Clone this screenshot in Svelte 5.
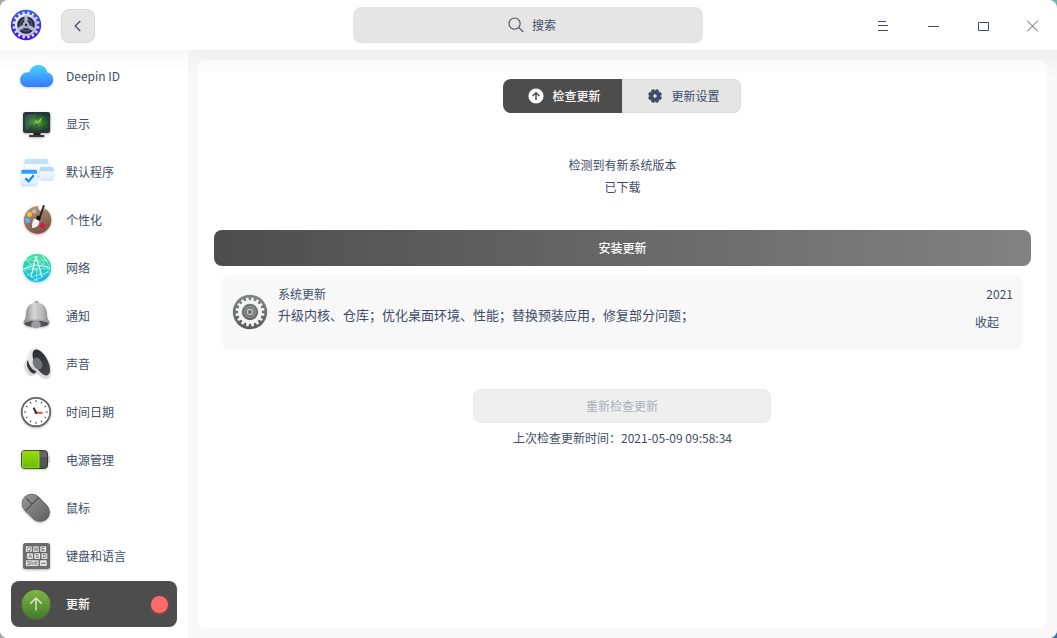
<script lang="ts">
	type MenuItem = { id: string; label: string; badge?: boolean };

	const items: MenuItem[] = [
		{ id: 'account', label: 'Deepin ID' },
		{ id: 'display', label: '显示' },
		{ id: 'defapp', label: '默认程序' },
		{ id: 'personal', label: '个性化' },
		{ id: 'network', label: '网络' },
		{ id: 'notify', label: '通知' },
		{ id: 'sound', label: '声音' },
		{ id: 'datetime', label: '时间日期' },
		{ id: 'power', label: '电源管理' },
		{ id: 'mouse', label: '鼠标' },
		{ id: 'keyboard', label: '键盘和语言' },
		{ id: 'update', label: '更新', badge: true }
	];

	let active = $state('update');
	let tab = $state('check');
	let expanded = $state(true);

	// evenly spaced angles for gear teeth and clock marks
	const steps = (n: number) => Array.from({ length: n }, (_, i) => (i * 360) / n);
</script>

<div class="window">
	<header>
		<svg class="logo" viewBox="0 0 32 32">
			<defs>
				<linearGradient id="logo-bg" x1="0" y1="0" x2="0" y2="1">
					<stop offset="0" stop-color="#2f5cf5" />
					<stop offset="1" stop-color="#4a10d8" />
				</linearGradient>
				<linearGradient id="logo-ring" x1="0" y1="0" x2="1" y2="1">
					<stop offset="0" stop-color="#f4f4fa" />
					<stop offset="1" stop-color="#a9abc4" />
				</linearGradient>
			</defs>
			<circle cx="16" cy="16" r="15.2" fill="url(#logo-bg)" />
			{#each steps(16) as a}
				<rect x="14.9" y="2.4" width="2.2" height="4" fill="#e4e6f3" transform="rotate({a + 11} 16 16)" />
			{/each}
			<circle cx="16" cy="16" r="10" fill="#25284c" stroke="url(#logo-ring)" stroke-width="2.4" />
			<circle cx="16" cy="16" r="6" fill="none" stroke="#55577a" stroke-width="1.4" />
			{#each steps(3) as a}
				<path d="M14.200 16l.2 9.500h3.200l.2-9.500z" fill="#b4b6ca" transform="rotate({a + 60} 16 16)" />
			{/each}
			<circle cx="16" cy="16" r="3.6" fill="#a6a8be" />
			<circle cx="16" cy="16" r="1.2" fill="#22264e" />
		</svg>
		<button class="back" aria-label="返回">
			<svg viewBox="0 0 12 12"><path d="M8.3 1L3.2 6l5.1 5" /></svg>
		</button>
		<div class="search">
			<svg viewBox="0 0 16 16"><circle cx="6.6" cy="6.6" r="5.6" /><path d="M10.7 10.7l4.7 4.3" /></svg>
			<span>搜索</span>
		</div>
		<div class="controls">
			<svg viewBox="0 0 12 12"><path d="M1 1.5h8M1 5.5h10M1 10.5h10" /></svg>
			<svg viewBox="0 0 12 12"><path d="M1 6.5h11" /></svg>
			<svg viewBox="0 0 12 12"><path d="M1.5 2.5h10v8h-10z" /></svg>
			<svg viewBox="0 0 12 12"><path class="thin" d="M0 .5l11 11M11 .5l-11 11" /></svg>
		</div>
	</header>

	<div class="body">
		<nav>
			{#each items as item}
				<button class="item" class:active={item.id === active} onclick={() => (active = item.id)}>
					<svg class="icon" viewBox="0 0 36 36">
						{#if item.id === 'account'}
							<defs>
								<linearGradient id="cloud" x1="0" y1="0" x2="0" y2="1">
									<stop offset="0" stop-color="#45d7fc" />
									<stop offset="1" stop-color="#3a76fd" />
								</linearGradient>
							</defs>
							<path
								class="blue-shadow"
								d="M8.6 29a7.4 7.4 0 0 1-.2-14.8c.8 0 1.400 0 2 .3C11.300 10 15 7 19.300 7c4.700 0 8.300 3.200 9 7.500 3.600.4 5.900 3.300 5.900 7 0 4.200-3 7.500-7.200 7.500z"
								fill="url(#cloud)"
							/>
						{:else if item.id === 'display'}
							<defs>
								<radialGradient id="screen" cx=".52" cy=".55" r=".6">
									<stop offset="0" stop-color="#6fae1c" />
									<stop offset=".5" stop-color="#2d6a2a" />
									<stop offset="1" stop-color="#143c42" />
								</radialGradient>
							</defs>
							<g class="shadow">
								<path d="M14.500 26h7v3.400h-7z" fill="#1f1f1f" />
								<path d="M11.500 29h13a1 1 0 0 1 0 2h-14a1 1 0 0 1 1-2z" fill="#3a3a3a" />
								<rect x="4" y="6" width="27.200" height="21" rx="2.500" fill="#333" />
							</g>
							<rect x="5.800" y="7.600" width="23.600" height="16.400" rx=".8" fill="url(#screen)" />
							<path d="M5.800 8.400h12L9 24H5.800z" fill="#fff" opacity=".1" />
							<path d="M23.500 10.500l-4.500 4.500-4.500-1.500 2.500 2.300-3.500 1.200 4 .4 1 2.600 1.200-3.500 2-.8z" fill="#7cc06a" />
							<path d="M17.300 17l1.800 1-1.200 3-1.800-.4z" fill="#603a8c" />
						{:else if item.id === 'defapp'}
							<defs>
								<linearGradient id="pane" x1="0" y1="0" x2="0" y2="1">
									<stop offset="0" stop-color="#fff" />
									<stop offset="1" stop-color="#e0edff" />
								</linearGradient>
							</defs>
							<g class="blue-shadow faint">
								<rect x="5.500" y="5" width="23.500" height="17" rx="2" fill="#f4f9ff" />
							</g>
							<path d="M7.500 5h19.500a2 2 0 0 1 2 2v3H5.500V7a2 2 0 0 1 2-2z" fill="#c4e0ff" />
							<g class="blue-shadow">
								<rect x="20.800" y="13" width="13.500" height="12" rx="1.800" fill="url(#pane)" />
								<path d="M22.600 13h9.900a1.800 1.800 0 0 1 1.800 1.800v2.400H20.800v-2.400a1.800 1.800 0 0 1 1.800-1.800z" fill="#b5d7fe" />
							</g>
							<g class="blue-shadow">
								<rect x="2.300" y="15.700" width="15.700" height="15" rx="1.500" fill="url(#pane)" />
								<path d="M3.800 15.700h12.700a1.500 1.500 0 0 1 1.500 1.500v2.500H2.300v-2.500a1.500 1.500 0 0 1 1.500-1.500z" fill="#2c9dff" />
							</g>
							<path d="M6.300 24.200l3.200 3.200 5.300-6.200" fill="none" stroke="#1089ff" stroke-width="2.200" />
						{:else if item.id === 'personal'}
							<defs>
								<linearGradient id="palette" x1="0" y1="0" x2=".4" y2="1">
									<stop offset="0" stop-color="#b59a86" />
									<stop offset="1" stop-color="#7c5747" />
								</linearGradient>
							</defs>
							<path
								class="brown-shadow"
								d="M19.500 4.300c-1 2.600.6 5 3.300 4.600 1.900-.3 2.600-1.300 2.800-2.700A13.700 13.700 0 1 1 19.500 4.300z"
								fill="url(#palette)"
							/>
							<circle cx="15.300" cy="9.500" r="2.100" fill="#dab7a8" />
							<circle cx="10.500" cy="12.300" r="2.600" fill="#f5b840" />
							<circle cx="8.500" cy="18.400" r="2.700" fill="#62aef2" />
							<circle cx="23.500" cy="23.600" r="2.700" fill="#dc153f" />
							<path d="M19.600 15.500l4.200-11.800 1-.8 1.100.8-.5 1.400-4 11.400z" fill="#222" />
							<path d="M18.400 13.200l3.600 2.200-1.600 3.500-3.800-2z" fill="#111" />
							<path d="M16 16.500l4.300 2.400c0 5.100-3 6.500-7.300 7.100.3-3.300-.2-7.500 3-9.500z" fill="#f5f2ef" />
						{:else if item.id === 'network'}
							<defs>
								<linearGradient id="globe" x1="0" y1="0" x2="0" y2="1">
									<stop offset="0" stop-color="#36e08b" />
									<stop offset=".55" stop-color="#22cdc1" />
									<stop offset="1" stop-color="#16b3ef" />
								</linearGradient>
							</defs>
							<circle class="cyan-shadow" cx="18" cy="18" r="14" fill="url(#globe)" />
							<path
								d="M17 6l-5 21M17 6l6 21M17 6l11 5M17 6L7 10M7 10l10 9M7 10l21 1M28 11l-11 8M28 11l3 8M4.500 19H17M17 19l14-.5M4.500 19L12 27M4.500 19l13.500-8M12 27l18-5M23 27l-6-8M23 27l-9 4M12 27l7 4M23 27l8-8M18 11l13 7.500M17 19l1 12M8 26l9-7"
								fill="none"
								stroke="#e5fff9"
								stroke-width=".6"
								opacity=".85"
							/>
							<path d="M17 6l-5 21M17 6l6 21M4.500 19L17 15l12 2M23 5.500l5 5.500" fill="none" stroke="#fff" stroke-width=".9" />
						{:else if item.id === 'notify'}
							<defs>
								<linearGradient id="bell" x1="0" y1="0" x2="1" y2="0">
									<stop offset="0" stop-color="#7d7d7d" />
									<stop offset=".4" stop-color="#d6d6d6" />
									<stop offset=".75" stop-color="#b5b5b5" />
									<stop offset="1" stop-color="#808080" />
								</linearGradient>
							</defs>
							<g class="shadow">
								<circle cx="17.500" cy="5" r="2.200" fill="#a5a5a5" />
								<path
									d="M17.500 4.800c6.500 0 9.800 4.200 10.300 9.700.3 4 .3 6.500 2 8.300.8.800.8 2.600-.4 3.600-2 1.900-7.200 2.700-11.900 2.700S7.600 28.300 5.600 26.400c-1.200-1-1.200-2.800-.4-3.600 1.700-1.800 1.700-4.300 2-8.300.5-5.500 3.800-9.700 10.300-9.700z"
									fill="url(#bell)"
								/>
							</g>
							<ellipse cx="17.500" cy="25.800" rx="12" ry="3" fill="#505050" />
							<ellipse cx="17" cy="26.500" rx="4.800" ry="3.800" fill="#9c9ca0" />
							<path d="M5 24.500c3-3.200 22-3.200 25 0" fill="none" stroke="#9a9a9a" />
						{:else if item.id === 'sound'}
							<defs>
								<linearGradient id="horn" x1="0" y1="0" x2="1" y2="0">
									<stop offset="0" stop-color="#f2f2f2" />
									<stop offset=".5" stop-color="#b4b4b4" />
									<stop offset="1" stop-color="#777" />
								</linearGradient>
								<linearGradient id="cone" x1="0" y1="0" x2="0" y2="1">
									<stop offset="0" stop-color="#2b2d30" />
									<stop offset="1" stop-color="#45474a" />
								</linearGradient>
							</defs>
							<g class="shadow">
								<ellipse cx="10.500" cy="21.500" rx="4" ry="7.500" transform="rotate(-25 10.500 21.500)" fill="#d9d9df" />
								<ellipse cx="12.700" cy="20.500" rx="4" ry="7.500" transform="rotate(-25 12.700 20.500)" fill="#333" />
								<path d="M13 2.800C11.200 7 8.600 9.800 9 13.500c.5 5 3.500 9.800 8 12 4.500 1.800 8 4.500 12 5.800z" fill="url(#horn)" />
								<ellipse cx="21.800" cy="16.700" rx="7.800" ry="15.700" transform="rotate(-27 21.800 16.700)" fill="#e6e6e9" />
							</g>
							<ellipse cx="22.300" cy="16.500" rx="6.700" ry="14.200" transform="rotate(-27 22.300 16.500)" fill="url(#cone)" />
							<ellipse cx="18.500" cy="17.500" rx="4.400" ry="6.300" transform="rotate(-27 18.500 17.500)" fill="#727478" />
						{:else if item.id === 'datetime'}
							<circle class="shadow" cx="17" cy="18" r="14.200" fill="#fff" stroke="#616161" stroke-width="1.700" />
							{#each steps(12) as a}
								<path d="M17 6.200v2" stroke="#444" stroke-width="1" transform="rotate({a} 17 18)" />
							{/each}
							<path d="M17.200 19l-2.600-5.400" stroke="#333" stroke-width="2" />
							<path d="M17 18.800h6.500" stroke="#fb4a4f" stroke-width="2" />
							<circle cx="17" cy="18.600" r="1.500" fill="#444" />
						{:else if item.id === 'power'}
							<defs>
								<linearGradient id="charge" x1="0" y1="0" x2="0" y2="1">
									<stop offset="0" stop-color="#9bd90c" />
									<stop offset="1" stop-color="#67bd00" />
								</linearGradient>
							</defs>
							<rect x="27" y="13.500" width="4" height="7.500" rx="1" fill="#cfcfcf" />
							<rect class="green-shadow" x="2.500" y="8.500" width="26" height="18" rx="3.200" fill="#545454" stroke="#353535" />
							<path d="M5.300 9.300H20v16.400H5.300a2 2 0 0 1-2-2V11.300a2 2 0 0 1 2-2z" fill="url(#charge)" stroke="#a9e93a" stroke-width=".8" />
							<path d="M21 9.300h5a2 2 0 0 1 2 2v4h-7z" fill="#777" opacity=".5" />
						{:else if item.id === 'mouse'}
							<defs>
								<linearGradient id="mouse" x1="0" y1="0" x2="0" y2="1">
									<stop offset="0" stop-color="#929292" />
									<stop offset="1" stop-color="#656565" />
								</linearGradient>
							</defs>
							<g class="shadow">
								<rect x="7.200" y="2" width="19.600" height="31.500" rx="9.700" fill="#4e4e4e" transform="rotate(-45 17 18)" />
							</g>
							<g transform="rotate(-45 17 18)">
								<rect x="7.600" y="2.200" width="18.600" height="30.600" rx="9.300" fill="url(#mouse)" />
								<path d="M7.500 12.500h19M17 4v8.500" fill="none" stroke="#484848" />
							</g>
						{:else if item.id === 'keyboard'}
							<rect class="shadow" x="4" y="5" width="27" height="26" rx="2.500" fill="#6c6c6c" />
							<g fill="#ececec" stroke="#494949" stroke-width=".5">
								<rect x="6.500" y="8" width="6.600" height="6.300" rx="1" />
								<rect x="13.700" y="8" width="6.600" height="6.300" rx="1" />
								<rect x="20.900" y="8" width="6.600" height="6.300" rx="1" />
								<rect x="7.700" y="15" width="6.600" height="6.300" rx="1" />
								<rect x="14.900" y="15" width="6.600" height="6.300" rx="1" />
								<rect x="22.100" y="15" width="6.600" height="6.300" rx="1" />
								<rect x="6.500" y="22" width="13.500" height="6.300" rx="1" />
								<rect x="20.600" y="22" width="7.500" height="6.300" rx="1" />
							</g>
							<g class="keys">
								<text x="9.800" y="13.300">Q</text>
								<text x="17" y="13.300">W</text>
								<text x="24.200" y="13.300">E</text>
								<text x="11" y="20.300">A</text>
								<text x="18.200" y="20.300">S</text>
								<text x="25.400" y="20.300">D</text>
								<text x="13.200" y="27.300">Shift</text>
							</g>
							<path d="M22.200 25.200h4.400" stroke="#555" />
						{:else}
							<defs>
								<linearGradient id="upd" x1="0" y1="0" x2="0" y2="1">
									<stop offset="0" stop-color="#82b545" />
									<stop offset="1" stop-color="#3f7f28" />
								</linearGradient>
							</defs>
							<circle class="green-shadow" cx="17" cy="18" r="14" fill="url(#upd)" />
							<path d="M17 24.500V12.200M11.300 17.600l5.700-5.600 5.700 5.600" fill="none" stroke="#dadfd3" stroke-width="1.500" />
						{/if}
					</svg>
					<span>{item.label}</span>
					{#if item.badge}<i class="badge"></i>{/if}
				</button>
			{/each}
		</nav>

		<main>
			<section class="panel">
				<div class="tabs">
					<button class:on={tab === 'check'} onclick={() => (tab = 'check')}>
						<svg viewBox="0 0 16 16">
							<circle cx="8" cy="8" r="7.600" fill="currentColor" />
							<path d="M8 12V5M4.600 8L8 4.700 11.400 8" fill="none" stroke="#4d4d4d" stroke-width="1.500" />
						</svg>
						检查更新
					</button>
					<button class:on={tab === 'setting'} onclick={() => (tab = 'setting')}>
						<svg viewBox="0 0 16 16">
							{#each steps(8) as a}
								<rect x="6.300" y="1.100" width="3.400" height="4" rx=".7" fill="currentColor" transform="rotate({a + 22.5} 8 8)" />
							{/each}
							<circle cx="8" cy="8" r="3.700" fill="none" stroke="currentColor" stroke-width="4" />
						</svg>
						更新设置
					</button>
				</div>

				<div class="status">
					<p>检测到有新系统版本</p>
					<p>已下载</p>
				</div>

				<button class="install">安装更新</button>

				<article class="card">
					<svg class="gear" viewBox="0 0 36 36">
						<defs>
							<linearGradient id="gear" x1="0" y1="0" x2="0" y2="1">
								<stop offset="0" stop-color="#858789" />
								<stop offset="1" stop-color="#565b5d" />
							</linearGradient>
						</defs>
						<circle cx="18" cy="18" r="17.200" fill="url(#gear)" />
						{#each steps(16) as a}
							<path d="M16.900 3.400h2.200l.6 4h-3.400z" fill="#f3f3f3" transform="rotate({a + 11} 18 18)" />
						{/each}
						<circle cx="18" cy="18" r="10" fill="none" stroke="#f3f3f3" stroke-width="3.600" />
						<circle cx="18" cy="18" r="5.300" fill="none" stroke="#8c8f90" stroke-width="1.500" />
						<circle cx="18" cy="18" r="2.700" fill="none" stroke="#c4c6c6" stroke-width="1.200" />
					</svg>
					<div class="info">
						<h3>系统更新</h3>
						{#if expanded}
							<p>升级内核、仓库；优化桌面环境、性能；替换预装应用，修复部分问题；</p>
						{/if}
					</div>
					<div class="meta">
						<span>2021</span>
						<button onclick={() => (expanded = !expanded)}>{expanded ? '收起' : '展开'}</button>
					</div>
				</article>

				<button class="recheck" disabled>重新检查更新</button>
				<p class="last">上次检查更新时间：2021-05-09 09:58:34</p>
			</section>
		</main>
	</div>
</div>

<style>
	:global(body) {
		background:
			linear-gradient(to right, #a6a6a6 50%, transparent 50%),
			linear-gradient(#6fb3b3 50%, #3471a8 50%);
	}

	.window {
		width: 1057px;
		height: 638px;
		display: flex;
		flex-direction: column;
		overflow: hidden;
		border-radius: 8px;
		background: #fff;
		color: #414d68;
		font: 12px/18px 'Noto Sans CJK SC', sans-serif;
	}

	button {
		font: inherit;
		color: inherit;
		border: none;
		padding: 0;
		background: none;
	}

	p,
	h3 {
		margin: 0;
		font-size: 12px;
		font-weight: 400;
	}

	header {
		height: 50px;
		flex: none;
		display: flex;
		align-items: center;
		padding: 0 18px 0 10px;
	}

	.logo {
		width: 32px;
		height: 32px;
	}

	.back {
		width: 34px;
		height: 34px;
		box-sizing: border-box;
		margin: 2px 0 0 19px;
		display: grid;
		place-items: center;
		background: #e5e5e5;
		border: 1px solid #d9d9d9;
		border-radius: 8px;
	}

	.back svg {
		width: 12px;
		height: 12px;
		fill: none;
		stroke: #414d68;
		stroke-width: 1.3;
	}

	.search {
		width: 350px;
		height: 36px;
		box-sizing: border-box;
		margin-left: 258px;
		padding-left: 8px;
		display: flex;
		align-items: center;
		justify-content: center;
		gap: 8px;
		border-radius: 8px;
		background: #e5e5e5;
	}

	.search svg {
		width: 16px;
		height: 16px;
		fill: none;
		stroke: #414d68;
		stroke-width: 1.1;
	}

	.controls {
		display: flex;
		gap: 38px;
		margin-left: auto;
		padding-top: 2px;
	}

	.controls svg {
		width: 12px;
		height: 12px;
		fill: none;
		stroke: #414d68;
	}

	.controls .thin {
		stroke-width: 0.9;
	}

	.body {
		flex: 1;
		display: flex;
		min-height: 0;
	}

	nav {
		width: 188px;
		box-sizing: border-box;
		padding: 3px 11px;
		display: flex;
		flex-direction: column;
		gap: 2px;
		background: linear-gradient(#f8f8f8, #fff 20px);
	}

	.item {
		height: 46px;
		flex: none;
		display: flex;
		align-items: center;
		gap: 11px;
		padding: 0 8px;
		border-radius: 8px;
		text-align: left;
	}

	.item.active {
		background: #4d4d4d;
		color: #fff;
		font-weight: 500;
	}

	.icon {
		width: 36px;
		height: 36px;
		overflow: visible;
	}

	.shadow {
		filter: drop-shadow(0 1px 1px rgba(0, 0, 0, 0.3));
	}

	.blue-shadow {
		filter: drop-shadow(0 1px 1px rgba(60, 140, 240, 0.4));
	}

	.blue-shadow.faint {
		opacity: 0.8;
	}

	.brown-shadow {
		filter: drop-shadow(0 1px 1px rgba(160, 60, 30, 0.5));
	}

	.cyan-shadow {
		filter: drop-shadow(0 1px 1.5px rgba(24, 196, 230, 0.5));
	}

	.green-shadow {
		filter: drop-shadow(0 1px 1px rgba(120, 190, 20, 0.5));
	}

	.keys text {
		font: 5.5px 'Liberation Sans', sans-serif;
		text-anchor: middle;
		fill: #444;
	}

	.badge {
		width: 17px;
		height: 17px;
		margin: 0 1px 0 auto;
		border-radius: 50%;
		background: #ff6a6a;
		box-shadow: 0 1px 3px rgba(255, 80, 80, 0.5);
	}

	main {
		flex: 1;
		padding: 10px;
		background: linear-gradient(#f0f0f0, #f8f8f8 26px);
	}

	.panel {
		height: 568px;
		box-sizing: border-box;
		padding: 19px 16px 0;
		display: flex;
		flex-direction: column;
		align-items: center;
		border-radius: 8px;
		background: linear-gradient(#fafafa, #fff 18px);
	}

	.tabs {
		display: flex;
		width: 238px;
		height: 34px;
		margin-right: 1px;
	}

	.tabs button {
		flex: 1;
		display: flex;
		align-items: center;
		justify-content: center;
		gap: 8px;
		padding-left: 4px;
		background: #e5e5e5;
		box-shadow: inset 0 0 0 1px #dcdcdc;
	}

	.tabs button:first-child {
		border-radius: 8px 0 0 8px;
	}

	.tabs button:last-child {
		border-radius: 0 8px 8px 0;
	}

	.tabs .on {
		background: #4d4d4d;
		box-shadow: none;
		color: #fff;
		font-weight: 500;
	}

	.tabs svg {
		width: 16px;
		height: 16px;
	}

	.status {
		margin-top: 41px;
		line-height: 22px;
		text-align: center;
	}

	.install {
		align-self: stretch;
		height: 36px;
		margin-top: 32px;
		border-radius: 8px;
		background: linear-gradient(to right, #4d4d4d, #828282);
		color: #fff;
		font-weight: 500;
	}

	.card {
		width: 801px;
		height: 75px;
		box-sizing: border-box;
		margin-top: 9px;
		padding: 10px 10px 0;
		display: flex;
		border-radius: 8px;
		background: #f8f8f8;
	}

	.gear {
		width: 36px;
		height: 36px;
		margin: 9px 10px 0 0;
	}

	.info p {
		margin-top: 2px;
		font-size: 13px;
		line-height: 20px;
	}

	.meta {
		margin-left: auto;
		display: flex;
		flex-direction: column;
		align-items: flex-end;
		gap: 10px;
	}

	.meta button {
		margin-right: 14px;
	}

	.recheck {
		width: 298px;
		height: 34px;
		box-sizing: border-box;
		margin: 39px 1px 0 0;
		border: 1px solid #e9e9e9;
		border-radius: 8px;
		background: #efefef;
		color: #abb0bc;
	}

	.last {
		margin-top: 6px;
	}
</style>
